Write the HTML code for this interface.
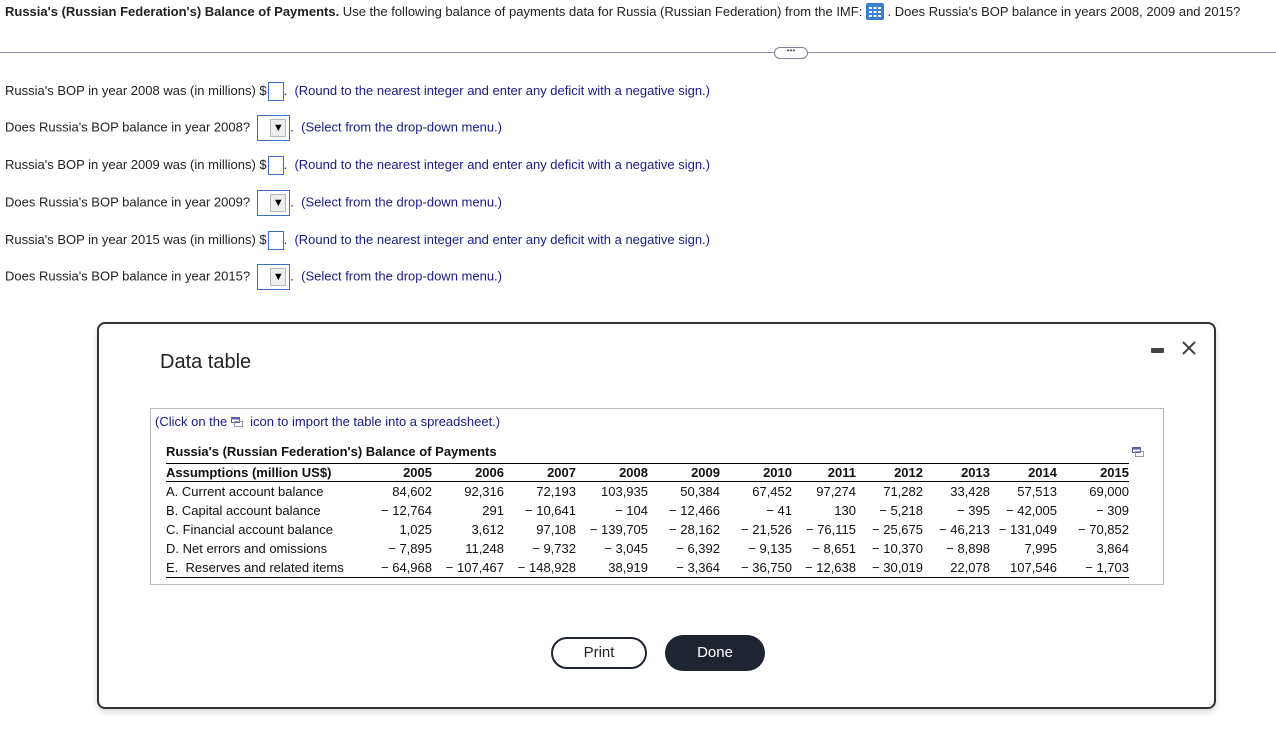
<!DOCTYPE html>
<html><head><meta charset="utf-8"><style>
body{margin:0;width:1276px;height:746px;background:#fff;font-family:"Liberation Sans",Arial,sans-serif;color:#222;position:relative;overflow:hidden}
.a{position:absolute;white-space:nowrap}
.q{font-size:13px;color:#222}
.h{color:#1a1a8a}
.box{display:inline-block;width:16px;height:19px;border:1px solid #3a6fc4;vertical-align:middle;margin-left:1px;box-sizing:border-box}
.dd{display:inline-block;width:33px;height:26px;border:1px solid #3a6fc4;vertical-align:middle;box-sizing:border-box;position:relative;background:#fff}
.dd span{position:absolute;left:12px;top:3px;width:16px;height:18px;background:#eee;border:1px solid #bbb;box-sizing:border-box;font-size:11px;text-align:center;line-height:16px;color:#000}
table{border-collapse:collapse;font-size:13px;color:#111;table-layout:fixed}
td{padding:0;height:19px;text-align:right;line-height:19px}
td:first-child{text-align:left}
</style></head><body>
<div class="a q" style="left:5px;top:3px">
<b>Russia's (Russian Federation's) Balance of Payments.</b> Use the following balance of payments data for Russia (Russian Federation) from the IMF: <svg width="18" height="17" viewBox="0 0 18 17" style="vertical-align:-4px"><rect x="0" y="0" width="18" height="17" rx="2" fill="#3a7fd0"/><g fill="#fff"><rect x="3" y="4" width="3" height="2"/><rect x="7.5" y="4" width="3" height="2"/><rect x="12" y="4" width="3" height="2"/><rect x="3" y="8" width="3" height="2"/><rect x="7.5" y="8" width="3" height="2"/><rect x="12" y="8" width="3" height="2"/><rect x="3" y="12" width="3" height="2"/><rect x="7.5" y="12" width="3" height="2"/><rect x="12" y="12" width="3" height="2"/></g></svg> . Does Russia's BOP balance in years 2008, 2009 and 2015?</div>
<div class="a" style="left:0;top:52px;width:1276px;height:1px;background:#8a92a6"></div>
<div class="a" style="left:774px;top:47px;width:32px;height:10px;border:1px solid #7a8296;border-radius:6px;background:#fff;font-size:8px;line-height:6px;text-align:center;color:#555">•••</div>

<div class="a q" style="left:5px;top:82px">Russia's BOP in year 2008 was (in millions) $<span class="box"></span>. &nbsp;<span class="h">(Round to the nearest integer and enter any deficit with a negative sign.)</span></div>
<div class="a q" style="left:5px;top:115px">Does Russia's BOP balance in year 2008? &nbsp;<span class="dd"><span>▼</span></span>. &nbsp;<span class="h">(Select from the drop-down menu.)</span></div>
<div class="a q" style="left:5px;top:156px">Russia's BOP in year 2009 was (in millions) $<span class="box"></span>. &nbsp;<span class="h">(Round to the nearest integer and enter any deficit with a negative sign.)</span></div>
<div class="a q" style="left:5px;top:190px">Does Russia's BOP balance in year 2009? &nbsp;<span class="dd"><span>▼</span></span>. &nbsp;<span class="h">(Select from the drop-down menu.)</span></div>
<div class="a q" style="left:5px;top:231px">Russia's BOP in year 2015 was (in millions) $<span class="box"></span>. &nbsp;<span class="h">(Round to the nearest integer and enter any deficit with a negative sign.)</span></div>
<div class="a q" style="left:5px;top:264px">Does Russia's BOP balance in year 2015? &nbsp;<span class="dd"><span>▼</span></span>. &nbsp;<span class="h">(Select from the drop-down menu.)</span></div>

<div class="a" style="left:97px;top:322px;width:1119px;height:387px;border:2px solid #333;border-radius:8px;box-sizing:border-box;box-shadow:0 3px 6px rgba(0,0,0,.15)"></div>
<div class="a" style="left:160px;top:351px;font-size:20px;color:#222">Data table</div>
<div class="a" style="left:1151px;top:348px;width:13px;height:5px;background:#444;border-radius:1px"></div>
<svg class="a" style="left:1182px;top:341px" width="14" height="14"><path d="M1 1L13 13M13 1L1 13" stroke="#444" stroke-width="2"/></svg>

<div class="a" style="left:150px;top:408px;width:1014px;height:177px;border:1px solid #bbb;box-sizing:border-box"></div>
<div class="a h" style="left:155px;top:414px;font-size:13px">(Click on the <svg width="12" height="10" style="vertical-align:-1px"><rect x="0.5" y="0.5" width="8" height="5" fill="none" stroke="#5561a8"/><rect x="0.5" y="0.5" width="8" height="2" fill="#5561a8"/><rect x="3.5" y="4.5" width="8" height="5" fill="none" stroke="#99a"/></svg> &nbsp;icon to import the table into a spreadsheet.)</div>
<svg class="a" style="left:1132px;top:447px" width="12" height="10"><rect x="0.5" y="0.5" width="8" height="5" fill="none" stroke="#5561a8"/><rect x="0.5" y="0.5" width="8" height="2" fill="#5561a8"/><rect x="3.5" y="4.5" width="8" height="5" fill="none" stroke="#99a"/></svg>
<div class="a" style="left:166px;top:444px;font-size:13px;font-weight:bold;color:#111">Russia's (Russian Federation's) Balance of Payments</div>
<div class="a" style="left:166px;top:463px;width:963px;height:1px;background:#000"></div>
<div class="a" style="left:166px;top:481px;width:963px;height:1px;background:#000"></div>
<div class="a" style="left:166px;top:577px;width:963px;height:1px;background:#000"></div>
<table class="a" style="left:166px;top:463px;width:963px">
<colgroup><col style="width:194px"><col style="width:72px"><col style="width:72px"><col style="width:72px"><col style="width:72px"><col style="width:72px"><col style="width:72px"><col style="width:64px"><col style="width:67px"><col style="width:67px"><col style="width:67px"><col style="width:72px"></colgroup>
<tr style="font-weight:bold"><td>Assumptions (million US$)</td><td>2005</td><td>2006</td><td>2007</td><td>2008</td><td>2009</td><td>2010</td><td>2011</td><td>2012</td><td>2013</td><td>2014</td><td>2015</td></tr>
<tr><td>A. Current account balance</td><td>84,602</td><td>92,316</td><td>72,193</td><td>103,935</td><td>50,384</td><td>67,452</td><td>97,274</td><td>71,282</td><td>33,428</td><td>57,513</td><td>69,000</td></tr>
<tr><td>B. Capital account balance</td><td>− 12,764</td><td>291</td><td>− 10,641</td><td>− 104</td><td>− 12,466</td><td>− 41</td><td>130</td><td>− 5,218</td><td>− 395</td><td>− 42,005</td><td>− 309</td></tr>
<tr><td>C. Financial account balance</td><td>1,025</td><td>3,612</td><td>97,108</td><td>− 139,705</td><td>− 28,162</td><td>− 21,526</td><td>− 76,115</td><td>− 25,675</td><td>− 46,213</td><td>− 131,049</td><td>− 70,852</td></tr>
<tr><td>D. Net errors and omissions</td><td>− 7,895</td><td>11,248</td><td>− 9,732</td><td>− 3,045</td><td>− 6,392</td><td>− 9,135</td><td>− 8,651</td><td>− 10,370</td><td>− 8,898</td><td>7,995</td><td>3,864</td></tr>
<tr><td>E.&nbsp; Reserves and related items</td><td>− 64,968</td><td>− 107,467</td><td>− 148,928</td><td>38,919</td><td>− 3,364</td><td>− 36,750</td><td>− 12,638</td><td>− 30,019</td><td>22,078</td><td>107,546</td><td>− 1,703</td></tr>
</table>

<div class="a" style="left:551px;top:637px;width:96px;height:32px;border:2px solid #1e2430;border-radius:17px;box-sizing:border-box;text-align:center;line-height:28px;font-size:15px;color:#222">Print</div>
<div class="a" style="left:665px;top:635px;width:100px;height:36px;background:#1e2430;border-radius:18px;text-align:center;line-height:36px;font-size:15px;color:#fff">Done</div>
</body></html>
